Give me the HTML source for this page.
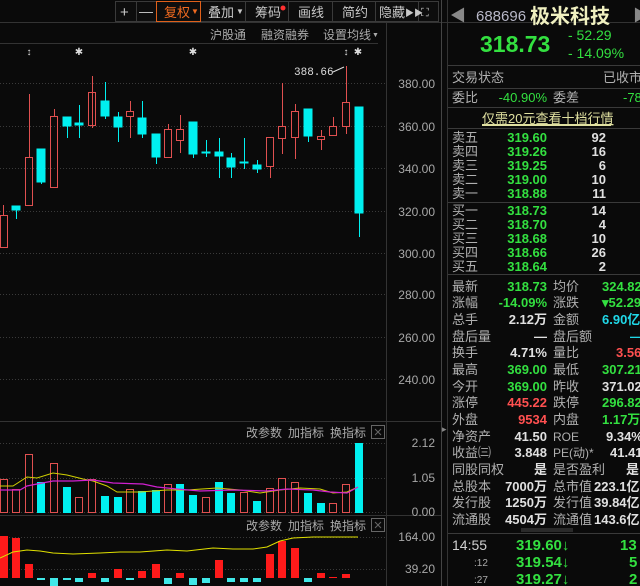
<!DOCTYPE html>
<html><head><meta charset="utf-8"><style>
html,body{margin:0;padding:0;background:#0a0a0a;width:640px;height:586px;overflow:hidden}
svg{display:block}
text{font-family:"Liberation Sans","Noto Sans CJK SC",sans-serif}
.m{font-family:"Liberation Mono","DejaVu Sans Mono",monospace}
</style></head><body>
<svg width="640" height="586" viewBox="0 0 640 586" xmlns="http://www.w3.org/2000/svg">
<rect width="640" height="586" fill="#0a0a0a"/>
<!-- toolbar -->
<g stroke="#3a3a3a" fill="#0d0d0d">
<rect x="115.5" y="1.5" width="323" height="20"/>
</g>
<g stroke="#3a3a3a">
<line x1="136.5" y1="2" x2="136.5" y2="21"/><line x1="156.5" y1="2" x2="156.5" y2="21"/>
<line x1="245.5" y1="2" x2="245.5" y2="21"/><line x1="288.5" y1="2" x2="288.5" y2="21"/>
<line x1="332.5" y1="2" x2="332.5" y2="21"/><line x1="375.5" y1="2" x2="375.5" y2="21"/>
<line x1="418.5" y1="2" x2="418.5" y2="21"/>
</g>
<rect x="156.5" y="1.5" width="44" height="20" fill="none" stroke="#e0601a"/>
<g font-size="13" fill="#c8c8c8">
<text x="120" y="17" font-size="15">+</text><text x="139" y="16" font-size="14">—</text>
<text x="164" y="17" fill="#f06a20">复权</text><text x="191" y="14" font-size="8" fill="#f06a20">▼</text>
<text x="208" y="17">叠加</text><text x="236" y="14" font-size="8">▼</text>
<text x="255" y="17">筹码</text>
<text x="298" y="17">画线</text><text x="342" y="17">简约</text>
<text x="379" y="17">隐藏</text><text x="405" y="16" font-size="9">▶▶</text>
<text x="421" y="16" font-size="11">⛶</text>
</g>
<circle cx="283" cy="8" r="2.5" fill="#ff3030"/>
<line x1="0" y1="22.5" x2="640" y2="22.5" stroke="#333"/>
<g font-size="12" fill="#aaa">
<text x="210" y="39">沪股通</text><text x="261" y="39">融资融券</text><text x="323" y="39">设置均线</text>
<text x="372" y="37" font-size="7">▼</text>
</g>
<line x1="0" y1="43.5" x2="378" y2="43.5" stroke="#333"/>
<g font-size="10" fill="#ddd" text-anchor="middle">
<text x="29" y="55">↕</text><text x="79" y="55">✱</text><text x="193" y="55">✱</text><text x="346" y="55">↕</text><text x="358" y="55">✱</text>
</g>
<!-- grid -->
<g stroke="#3a3a3a" stroke-dasharray="1,2">
<line x1="0" y1="83.5" x2="386" y2="83.5"/><line x1="0" y1="126.5" x2="386" y2="126.5"/>
<line x1="0" y1="168.5" x2="386" y2="168.5"/><line x1="0" y1="211.5" x2="386" y2="211.5"/>
<line x1="0" y1="253.5" x2="386" y2="253.5"/><line x1="0" y1="294.5" x2="386" y2="294.5"/>
<line x1="0" y1="337.5" x2="386" y2="337.5"/><line x1="0" y1="379.5" x2="386" y2="379.5"/>
<line x1="0" y1="443.5" x2="386" y2="443.5"/><line x1="0" y1="478.5" x2="386" y2="478.5"/>
<line x1="0" y1="512.5" x2="386" y2="512.5"/>
<line x1="0" y1="537.5" x2="386" y2="537.5"/><line x1="0" y1="569.5" x2="386" y2="569.5"/>
</g>
<line x1="386.5" y1="22" x2="386.5" y2="586" stroke="#333"/>
<line x1="441.5" y1="0" x2="441.5" y2="586" stroke="#444"/>
<line x1="447.5" y1="0" x2="447.5" y2="586" stroke="#333"/>
<line x1="0" y1="421.5" x2="441" y2="421.5" stroke="#333"/>
<line x1="0" y1="515.5" x2="441" y2="515.5" stroke="#333"/>
<g class="m" font-size="12" fill="#a8a8a8" text-anchor="end">
<text x="435" y="88">380.00</text><text x="435" y="131">360.00</text><text x="435" y="173">340.00</text>
<text x="435" y="216">320.00</text><text x="435" y="258">300.00</text><text x="435" y="299">280.00</text>
<text x="435" y="342">260.00</text><text x="435" y="384">240.00</text>
<text x="435" y="447">2.12</text><text x="435" y="482">1.05</text><text x="435" y="516">0.00</text>
<text x="435" y="541">164.00</text><text x="435" y="573">39.20</text>
</g>
<!-- candles -->
<g stroke="#e05050" fill="none">
<line x1="3.5" y1="205" x2="3.5" y2="215"/><rect x="0.5" y="215.5" width="7" height="32"/>
<line x1="29.5" y1="94" x2="29.5" y2="157"/><rect x="25.5" y="157.5" width="7" height="48"/>
<line x1="54.5" y1="109" x2="54.5" y2="116"/><rect x="50.5" y="116.5" width="7" height="71"/>
<line x1="92.5" y1="76" x2="92.5" y2="128"/><rect x="88.5" y="92.5" width="7" height="33"/>
<line x1="130.5" y1="101" x2="130.5" y2="138"/><rect x="126.5" y="111.5" width="7" height="5" fill="#0a0a0a"/>
<line x1="168.5" y1="124" x2="168.5" y2="129"/><rect x="164.5" y="129.5" width="7" height="28"/>
<line x1="180.5" y1="115" x2="180.5" y2="153"/><rect x="176.5" y="129.5" width="7" height="11" fill="#0a0a0a"/>
<line x1="270.5" y1="167" x2="270.5" y2="178"/><rect x="266.5" y="137.5" width="7" height="29"/>
<line x1="282.5" y1="83" x2="282.5" y2="154"/><rect x="278.5" y="126.5" width="7" height="12" fill="#0a0a0a"/>
<line x1="295.5" y1="104" x2="295.5" y2="159"/><rect x="291.5" y="111.5" width="7" height="26" fill="#0a0a0a"/>
<line x1="321.5" y1="130" x2="321.5" y2="150"/><rect x="317.5" y="136.5" width="7" height="3" fill="#0a0a0a"/>
<line x1="333.5" y1="117" x2="333.5" y2="126"/><rect x="329.5" y="126.5" width="7" height="9"/>
<line x1="346.5" y1="66" x2="346.5" y2="134"/><rect x="342.5" y="102.5" width="7" height="24" fill="#0a0a0a"/>
</g>
<g fill="#00f0f0" stroke="#00f0f0">
<line x1="16.5" y1="206" x2="16.5" y2="219"/><rect x="12" y="206" width="8" height="4"/>
<line x1="41.5" y1="149" x2="41.5" y2="184"/><rect x="37" y="149" width="8" height="33"/>
<line x1="67.5" y1="117" x2="67.5" y2="138"/><rect x="63" y="117" width="8" height="9"/>
<line x1="79.5" y1="105" x2="79.5" y2="138"/><rect x="75" y="123" width="8" height="2"/>
<line x1="105.5" y1="82" x2="105.5" y2="119"/><rect x="101" y="101" width="8" height="15"/>
<line x1="118.5" y1="112" x2="118.5" y2="142"/><rect x="114" y="117" width="8" height="10"/>
<line x1="142.5" y1="101" x2="142.5" y2="138"/><rect x="138" y="118" width="8" height="16"/>
<line x1="156.5" y1="134" x2="156.5" y2="164"/><rect x="152" y="134" width="8" height="23"/>
<line x1="193.5" y1="122" x2="193.5" y2="158"/><rect x="189" y="122" width="8" height="32"/>
<line x1="206.5" y1="140" x2="206.5" y2="157"/><rect x="202" y="152" width="8" height="1"/>
<line x1="219.5" y1="138" x2="219.5" y2="178"/><rect x="215" y="152" width="8" height="4"/>
<line x1="231.5" y1="153" x2="231.5" y2="178"/><rect x="227" y="158" width="8" height="9"/>
<line x1="244.5" y1="138" x2="244.5" y2="169"/><rect x="240" y="162" width="8" height="1"/>
<line x1="257.5" y1="160" x2="257.5" y2="173"/><rect x="253" y="165" width="8" height="4"/>
<line x1="308.5" y1="109" x2="308.5" y2="142"/><rect x="304" y="109" width="8" height="27"/>
<line x1="359.5" y1="107" x2="359.5" y2="237"/><rect x="355" y="107" width="8" height="106"/>
</g>
<text class="m" x="294" y="75" font-size="11" fill="#ddd">388.66</text>
<line x1="333" y1="72" x2="344" y2="67" stroke="#ddd"/>
<!-- volume panel -->
<g font-size="12" fill="#aaa">
<text x="246" y="437">改参数</text><text x="288" y="437">加指标</text><text x="330" y="437">换指标</text>
<text x="246" y="530">改参数</text><text x="288" y="530">加指标</text><text x="330" y="530">换指标</text>
</g>
<g stroke="#666" fill="none"><rect x="371.5" y="425.5" width="13" height="13"/><rect x="371.5" y="518.5" width="13" height="13"/>
<path d="M375 429l6 6M381 429l-6 6M375 522l6 6M381 522l-6 6"/></g>
<g stroke="#e05050" fill="none">
<rect x="0.5" y="479.5" width="7" height="33"/><rect x="12.5" y="489.5" width="7" height="23"/>
<rect x="25.5" y="454.5" width="7" height="58"/><rect x="50.5" y="463.5" width="7" height="49"/>
<rect x="75.5" y="497.5" width="7" height="15"/><rect x="88.5" y="479.5" width="7" height="33"/>
<rect x="126.5" y="489.5" width="7" height="23"/><rect x="164.5" y="484.5" width="7" height="28"/>
<rect x="202.5" y="497.5" width="7" height="15"/><rect x="240.5" y="492.5" width="7" height="20"/>
<rect x="266.5" y="488.5" width="7" height="24"/><rect x="278.5" y="478.5" width="7" height="34"/>
<rect x="291.5" y="482.5" width="7" height="30"/><rect x="329.5" y="503.5" width="7" height="9"/>
<rect x="342.5" y="484.5" width="7" height="28"/>
</g>
<g fill="#00f0f0">
<rect x="37" y="482" width="8" height="31"/><rect x="63" y="487" width="8" height="26"/>
<rect x="101" y="496" width="8" height="17"/><rect x="114" y="497" width="8" height="16"/>
<rect x="138" y="491" width="8" height="22"/><rect x="152" y="490" width="8" height="23"/>
<rect x="176" y="484" width="8" height="29"/><rect x="189" y="495" width="8" height="18"/>
<rect x="215" y="482" width="8" height="31"/><rect x="227" y="493" width="8" height="20"/>
<rect x="253" y="501" width="8" height="12"/><rect x="304" y="493" width="8" height="20"/>
<rect x="317" y="503" width="8" height="10"/><rect x="355" y="443" width="8" height="70"/>
</g>
<polyline fill="none" stroke="#d0d000" stroke-width="1" points="0,486 13,486 27,477 37,478 53,473 67,475 83,479 93,481 107,486 117,492 140,492 167,490 187,490 217,488 240,490 260,493 280,490 300,488 320,489 333,493 347,492 358,487"/>
<polyline fill="none" stroke="#d020d0" stroke-width="1.2" points="0,490 20,490 27,486 37,484 53,481 73,481 93,480 113,483 143,484 157,487 177,489 200,491 233,490 267,491 287,489 313,490 330,492 347,493 358,487"/>
<!-- macd panel -->
<g fill="#ff1a1a">
<rect x="0" y="536" width="8" height="42"/><rect x="12" y="538" width="8" height="40"/>
<rect x="25" y="564" width="8" height="14"/><rect x="88" y="573" width="8" height="5"/>
<rect x="114" y="569" width="8" height="9"/><rect x="138" y="571" width="8" height="7"/>
<rect x="152" y="564" width="8" height="14"/><rect x="176" y="573" width="8" height="5"/>
<rect x="215" y="560" width="8" height="18"/><rect x="266" y="554" width="8" height="24"/>
<rect x="278" y="541" width="8" height="37"/><rect x="291" y="548" width="8" height="30"/>
<rect x="317" y="573" width="8" height="5"/><rect x="329" y="577" width="8" height="1"/>
<rect x="342" y="574" width="8" height="4"/>
</g>
<g fill="#40e8e8">
<rect x="37" y="578" width="8" height="2"/><rect x="50" y="578" width="8" height="8"/>
<rect x="63" y="578" width="8" height="2"/><rect x="75" y="578" width="8" height="4"/>
<rect x="101" y="578" width="8" height="4"/><rect x="126" y="578" width="8" height="2"/>
<rect x="164" y="578" width="8" height="6"/><rect x="189" y="578" width="8" height="7"/>
<rect x="202" y="578" width="8" height="5"/><rect x="227" y="578" width="8" height="4"/>
<rect x="240" y="578" width="8" height="4"/><rect x="253" y="578" width="8" height="4"/>
<rect x="304" y="578" width="8" height="4"/>
</g>
<polyline fill="none" stroke="#e0e000" stroke-width="1" points="0,558 13,552 27,550 40,551 53,553 73,554 100,553 120,552 140,552 167,550 187,551 213,548 233,549 253,549 267,547 280,541 293,538 313,537 358,537"/>
<!-- right panel -->
<text x="450" y="21" font-size="16" fill="#888">◀</text>
<text x="476" y="21" font-size="15" fill="#b8b8c8">688696</text>
<text x="530" y="23" font-size="20" font-weight="bold" fill="#f0f0c0">极米科技</text>
<text x="633" y="21" font-size="16" fill="#888">▶</text>
<text x="480" y="52" font-size="23" font-weight="bold" fill="#33e040">318.73</text>
<text x="568" y="40" font-size="14" fill="#33e040">- 52.29</text>
<text x="568" y="58" font-size="14" fill="#33e040">- 14.09%</text>
<g stroke="#3a3a3a">
<line x1="448" y1="65.5" x2="640" y2="65.5"/><line x1="448" y1="88.5" x2="640" y2="88.5"/>
<line x1="448" y1="107.5" x2="640" y2="107.5"/><line x1="448" y1="128.5" x2="640" y2="128.5"/>
<line x1="448" y1="202.5" x2="640" y2="202.5"/><line x1="448" y1="274.5" x2="640" y2="274.5"/>
<line x1="448" y1="533.5" x2="640" y2="533.5"/>
</g>
<rect x="521" y="528" width="52" height="4" fill="#2a2a2a"/>
<g font-size="13" fill="#b0b0b0">
<text x="452" y="82">交易状态</text><text x="603" y="82">已收市</text>
<text x="452" y="102">委比</text><text x="553" y="102">委差</text>
</g>
<g font-size="13" fill="#33e040">
<text x="547" y="102" text-anchor="end">-40.90%</text><text x="623" y="102">-78</text>
</g>
<text x="482" y="123" font-size="13" fill="#e0e0a0" text-decoration="underline">仅需20元查看十档行情</text>
<line x1="482" y1="125.5" x2="611" y2="125.5" stroke="#e0e0a0"/>
<g font-size="13" fill="#b0b0b0">
<text x="452" y="142">卖五</text><text x="452" y="156">卖四</text><text x="452" y="170">卖三</text><text x="452" y="184">卖二</text><text x="452" y="198">卖一</text>
<text x="452" y="215">买一</text><text x="452" y="229">买二</text><text x="452" y="243">买三</text><text x="452" y="257">买四</text><text x="452" y="271">买五</text>
</g>
<g class="m" font-size="13" font-weight="bold" fill="#33e040" text-anchor="end">
<text x="547" y="142">319.60</text><text x="547" y="156">319.26</text><text x="547" y="170">319.25</text><text x="547" y="184">319.00</text><text x="547" y="198">318.88</text>
<text x="547" y="215">318.73</text><text x="547" y="229">318.70</text><text x="547" y="243">318.68</text><text x="547" y="257">318.66</text><text x="547" y="271">318.64</text>
</g>
<g class="m" font-size="13" font-weight="bold" fill="#e0e0e0" text-anchor="end">
<text x="606" y="142">92</text><text x="606" y="156">16</text><text x="606" y="170">6</text><text x="606" y="184">10</text><text x="606" y="198">11</text>
<text x="606" y="215">14</text><text x="606" y="229">4</text><text x="606" y="243">10</text><text x="606" y="257">26</text><text x="606" y="271">2</text>
</g>
<g font-size="13" fill="#b0b0b0">
<text x="452" y="291">最新</text><text x="452" y="307">涨幅</text><text x="452" y="324">总手</text><text x="452" y="341">盘后量</text>
<text x="452" y="357">换手</text><text x="452" y="374">最高</text><text x="452" y="391">今开</text><text x="452" y="407">涨停</text>
<text x="452" y="424">外盘</text><text x="452" y="441">净资产</text><text x="452" y="457">收益㈢</text><text x="452" y="474">同股同权</text>
<text x="452" y="491">总股本</text><text x="452" y="507">发行股</text><text x="452" y="524">流通股</text>
<text x="553" y="291">均价</text><text x="553" y="307">涨跌</text><text x="553" y="324">金额</text><text x="553" y="341">盘后额</text>
<text x="553" y="357">量比</text><text x="553" y="374">最低</text><text x="553" y="391">昨收</text><text x="553" y="407">跌停</text>
<text x="553" y="424">内盘</text><text x="553" y="441" font-size="12">ROE</text><text x="553" y="457" font-size="12">PE(动)*</text><text x="553" y="474">是否盈利</text>
<text x="553" y="491">总市值</text><text x="553" y="507">发行值</text><text x="553" y="524">流通值</text>
</g>
<g class="m" font-size="13" font-weight="bold" text-anchor="end">
<text x="547" y="291" fill="#33e040">318.73</text><text x="547" y="307" fill="#33e040">-14.09%</text>
<text x="547" y="324" fill="#e0e0e0">2.12万</text><text x="547" y="341" fill="#e0e0e0">—</text>
<text x="547" y="357" fill="#e0e0e0">4.71%</text><text x="547" y="374" fill="#33e040">369.00</text>
<text x="547" y="391" fill="#33e040">369.00</text><text x="547" y="407" fill="#ff5050">445.22</text>
<text x="547" y="424" fill="#ff5050">9534</text><text x="547" y="441" fill="#e0e0e0">41.50</text>
<text x="547" y="457" fill="#e0e0e0">3.848</text><text x="547" y="474" fill="#e0e0e0">是</text>
<text x="547" y="491" fill="#e0e0e0">7000万</text><text x="547" y="507" fill="#e0e0e0">1250万</text>
<text x="547" y="524" fill="#e0e0e0">4504万</text>
</g>
<g class="m" font-size="13" font-weight="bold">
<text x="602" y="291" fill="#33e040">324.82</text><text x="602" y="307" fill="#33e040">▾52.29</text>
<text x="602" y="324" fill="#20d8e8">6.90亿</text><text x="630" y="341" fill="#20d8e8">—</text>
<text x="616" y="357" fill="#ff5050">3.56</text><text x="602" y="374" fill="#33e040">307.21</text>
<text x="602" y="391" fill="#e0e0e0">371.02</text><text x="602" y="407" fill="#33e040">296.82</text>
<text x="602" y="424" fill="#33e040">1.17万</text><text x="606" y="441" fill="#e0e0e0">9.34%</text>
<text x="610" y="457" fill="#e0e0e0">41.41</text><text x="626" y="474" fill="#e0e0e0">是</text>
<text x="594" y="491" fill="#e0e0e0">223.1亿</text><text x="594" y="507" fill="#e0e0e0">39.84亿</text>
<text x="594" y="524" fill="#e0e0e0">143.6亿</text>
</g>
<text x="452" y="550" font-size="14" fill="#d0d0d0">14:55</text>
<text x="474" y="566" font-size="10" fill="#aaa">:12</text>
<text x="474" y="583" font-size="10" fill="#aaa">:27</text>
<g class="m" font-size="15" font-weight="bold" fill="#33e040">
<text x="516" y="550">319.60↓</text><text x="516" y="567">319.54↓</text><text x="516" y="584">319.27↓</text>
<text x="620" y="550">13</text><text x="629" y="567">5</text><text x="629" y="584">2</text>
</g>
<text x="442" y="432" font-size="9" fill="#888">▸</text>
</svg>
</body></html>
